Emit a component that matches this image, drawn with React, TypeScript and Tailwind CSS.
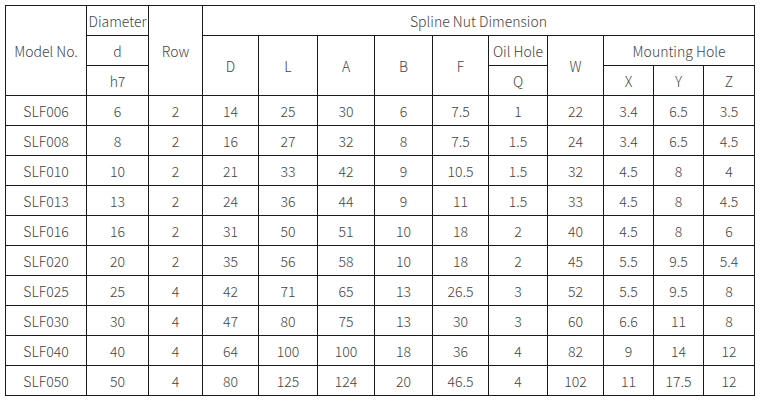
import React from 'react';

const rows: (string | number)[][] = [
  ['SLF006', 6, 2, 14, 25, 30, 6, '7.5', 1, 22, '3.4', '6.5', '3.5'],
  ['SLF008', 8, 2, 16, 27, 32, 8, '7.5', '1.5', 24, '3.4', '6.5', '4.5'],
  ['SLF010', 10, 2, 21, 33, 42, 9, '10.5', '1.5', 32, '4.5', 8, 4],
  ['SLF013', 13, 2, 24, 36, 44, 9, 11, '1.5', 33, '4.5', 8, '4.5'],
  ['SLF016', 16, 2, 31, 50, 51, 10, 18, 2, 40, '4.5', 8, 6],
  ['SLF020', 20, 2, 35, 56, 58, 10, 18, 2, 45, '5.5', '9.5', '5.4'],
  ['SLF025', 25, 4, 42, 71, 65, 13, '26.5', 3, 52, '5.5', '9.5', 8],
  ['SLF030', 30, 4, 47, 80, 75, 13, 30, 3, 60, '6.6', 11, 8],
  ['SLF040', 40, 4, 64, 100, 100, 18, 36, 4, 82, 9, 14, 12],
  ['SLF050', 50, 4, 80, 125, 124, 20, '46.5', 4, 102, 11, '17.5', 12],
];

// column widths taken from the grid lines
const widths = [81, 62, 54, 56, 59, 57, 58, 56, 59, 56, 50, 50, 51];

const cell = 'border border-[#1a1a1a] h-[30px] p-0 text-center align-middle font-light';

export default function App() {
  return (
    <div className="w-[763px] h-[404px] bg-white pt-[5px] pl-[5px] overflow-hidden">
      <table
        className="table-fixed border-collapse text-[14px] leading-none text-[#444] font-light"
        style={{ fontFamily: '"Noto Sans CJK SC Light", "Noto Sans CJK SC DemiLight", "Noto Sans CJK SC", "Noto Sans", sans-serif' }}
      >
        <colgroup>
          {widths.map((w, i) => (
            <col key={i} style={{ width: w }} />
          ))}
        </colgroup>
        <thead>
          <tr>
            <th rowSpan={3} className={cell}>Model No.</th>
            <th className={cell}>Diameter</th>
            <th rowSpan={3} className={cell}>Row</th>
            <th colSpan={10} className={cell}>Spline Nut Dimension</th>
          </tr>
          <tr>
            <th className={cell}>d</th>
            <th rowSpan={2} className={cell}>D</th>
            <th rowSpan={2} className={cell}>L</th>
            <th rowSpan={2} className={cell}>A</th>
            <th rowSpan={2} className={cell}>B</th>
            <th rowSpan={2} className={cell}>F</th>
            <th className={cell}>Oil Hole</th>
            <th rowSpan={2} className={cell}>W</th>
            <th colSpan={3} className={cell}>Mounting Hole</th>
          </tr>
          <tr>
            <th className={cell}>h7</th>
            <th className={cell}>Q</th>
            <th className={cell}>X</th>
            <th className={cell}>Y</th>
            <th className={cell}>Z</th>
          </tr>
        </thead>
        <tbody>
          {rows.map((r) => (
            <tr key={r[0]}>
              {r.map((v, i) => (
                <td key={i} className={cell}>{v}</td>
              ))}
            </tr>
          ))}
        </tbody>
      </table>
    </div>
  );
}
